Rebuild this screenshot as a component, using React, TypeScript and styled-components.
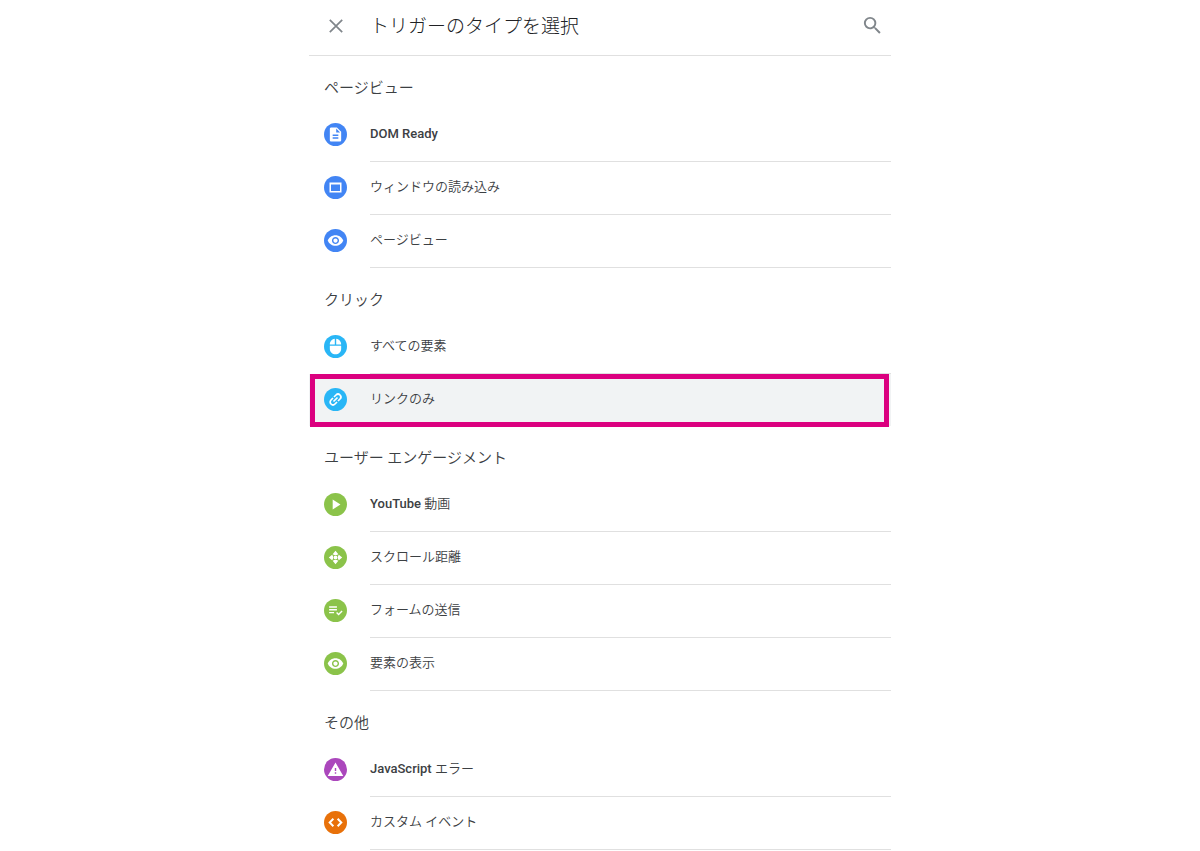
import React, { useState } from "react";
import type { ComponentType } from "react";
import styled, { createGlobalStyle, css } from "styled-components";
import {
  MdDescription,
  MdMouse,
  MdPlayArrow,
  MdPlaylistAddCheck,
  MdSearch,
  MdVisibility,
  MdWarning,
} from "react-icons/md";

const GlobalStyle = createGlobalStyle`
  *, *::before, *::after { box-sizing: border-box; }
  body {
    margin: 0;
    background: #fff;
    color: #3c4043;
    font-family: Roboto, "Noto Sans CJK JP", sans-serif;
  }
`;

const Panel = styled.main`
  max-width: 582px;
  margin: 0 auto;
`;

const Header = styled.header`
  display: flex;
  align-items: center;
  height: 56px;
  padding: 0 6px 4px 14px;
  border-bottom: 1px solid #e0e0e0;
`;

const Title = styled.h1`
  flex: 1;
  margin: 0 0 0 22px;
  padding-top: 2px;
  font-size: 19px;
  line-height: 26px;
  font-weight: 300;
  color: #202124;
`;

const IconButton = styled.button`
  display: flex;
  align-items: center;
  justify-content: center;
  width: 25px;
  height: 25px;
  padding: 0;
  border: 0;
  background: none;
  color: #80868b;
  cursor: pointer;
`;

const GroupTitle = styled.h2`
  margin: 0;
  height: 53px;
  padding: 20px 15px 9px;
  font-size: 15px;
  line-height: 24px;
  font-weight: 350;
  color: #3c4043;
`;

const List = styled.ul`
  margin: 0;
  padding: 0;
  list-style: none;
`;

const highlighted = css`
  background: #f1f3f4;

  &::after {
    content: "";
    position: absolute;
    inset: 0 2px -1px 1px;
    border: 5px solid #db007f;
  }
`;

const Row = styled.button<{ $selected: boolean }>`
  position: relative;
  display: flex;
  width: 100%;
  padding: 0 0 0 15px;
  border: 0;
  background: none;
  color: inherit;
  font: inherit;
  text-align: left;
  cursor: pointer;
  ${(p) => p.$selected && highlighted}
`;

const Badge = styled.span<{ $color: string }>`
  display: flex;
  align-items: center;
  justify-content: center;
  flex: none;
  width: 23px;
  height: 23px;
  margin: 14px 23px 0 0;
  border-radius: 50%;
  background: ${(p) => p.$color};
  color: #fff;
`;

const Label = styled.span<{ $divided: boolean }>`
  flex: 1;
  padding: 14px 0 16px;
  border-bottom: ${(p) => (p.$divided ? "1px solid #e0e0e0" : "0")};
  font-size: 13px;
  line-height: 22px;
  font-weight: 500;
`;

const Kana = styled.span`
  font-weight: 350;
`;

type IconProps = { size?: number };

const LinkIcon = ({ size = 17 }: IconProps) => (
  <svg width={size} height={size} viewBox="0 0 24 24" fill="none" stroke="currentColor" strokeWidth="2.4" aria-hidden="true">
    <g transform="rotate(-45 12 12)">
      <path d="M11 8H7a4 4 0 0 0 0 8h4M13 8h4a4 4 0 0 1 0 8h-4M8 12h8" />
    </g>
  </svg>
);

const CodeIcon = ({ size = 17 }: IconProps) => (
  <svg width={size} height={size} viewBox="0 0 24 24" fill="none" stroke="currentColor" strokeWidth="2.8" aria-hidden="true">
    <path d="M9 6.800L3.800 12 9 17.200M15 6.800L20.200 12 15 17.200" />
  </svg>
);

const ScrollIcon = ({ size = 17 }: IconProps) => (
  <svg width={size} height={size} viewBox="0 0 24 24" fill="currentColor" aria-hidden="true">
    <circle cx="12" cy="12" r="2.800" />
    <path d="M12 2.500l4 4.800-2.200 1.200h-3.600L8 7.300zM12 21.500l4-4.800-2.200-1.200h-3.600L8 16.700zM2.500 12l4.800-4 1.200 2.200v3.600L7.300 16zM21.500 12l-4.800-4-1.200 2.200v3.600l1.200 2.200z" />
  </svg>
);

const WindowIcon = ({ size = 17 }: IconProps) => (
  <svg width={size} height={size} viewBox="0 0 17 17" fill="currentColor" aria-hidden="true">
    <path fillRule="evenodd" d="M2.500 3.500h12v10h-12zM4 5.500v6.500h9V5.500z" />
  </svg>
);

const CloseIcon = () => (
  <svg width="14" height="14" viewBox="0 0 14 14" fill="none" stroke="currentColor" strokeWidth="1.7" aria-hidden="true">
    <path d="M.8.8l12.4 12.4M13.2.8L.8 13.2" />
  </svg>
);

type Trigger = {
  latin?: string;
  kana?: string;
  icon: ComponentType<IconProps>;
  color?: string;
};
type Group = { title: string; color: string; triggers: Trigger[] };

const groups: Group[] = [
  {
    title: "ページビュー",
    color: "#4285f4",
    triggers: [
      { latin: "DOM Ready", icon: MdDescription },
      { kana: "ウィンドウの読み込み", icon: WindowIcon },
      { kana: "ページビュー", icon: MdVisibility },
    ],
  },
  {
    title: "クリック",
    color: "#29b6f6",
    triggers: [
      { kana: "すべての要素", icon: MdMouse },
      { kana: "リンクのみ", icon: LinkIcon },
    ],
  },
  {
    title: "ユーザー エンゲージメント",
    color: "#8bc34a",
    triggers: [
      { latin: "YouTube ", kana: "動画", icon: MdPlayArrow },
      { kana: "スクロール距離", icon: ScrollIcon },
      { kana: "フォームの送信", icon: MdPlaylistAddCheck },
      { kana: "要素の表示", icon: MdVisibility },
    ],
  },
  {
    title: "その他",
    color: "#ab47bc",
    triggers: [
      { latin: "JavaScript ", kana: "エラー", icon: MdWarning },
      { kana: "カスタム イベント", icon: CodeIcon, color: "#e8710a" },
    ],
  },
];

export default function App() {
  const [selected, setSelected] = useState("リンクのみ");

  return (
    <>
      <GlobalStyle />
      <Panel lang="ja">
        <Header>
          <IconButton type="button" aria-label="閉じる">
            <CloseIcon />
          </IconButton>
          <Title>トリガーのタイプを選択</Title>
          <IconButton type="button" aria-label="検索">
            <MdSearch size={23} />
          </IconButton>
        </Header>
        {groups.map((group) => (
          <section key={group.title}>
            <GroupTitle>{group.title}</GroupTitle>
            <List>
              {group.triggers.map((trigger) => {
                const name = `${trigger.latin ?? ""}${trigger.kana ?? ""}`;
                const isSelected = name === selected;
                const Icon = trigger.icon;
                return (
                  <li key={name}>
                    <Row type="button" $selected={isSelected} aria-pressed={isSelected} onClick={() => setSelected(name)}>
                      <Badge $color={trigger.color ?? group.color}>
                        <Icon size={17} />
                      </Badge>
                      <Label $divided={!isSelected}>
                        {trigger.latin}
                        {trigger.kana && <Kana>{trigger.kana}</Kana>}
                      </Label>
                    </Row>
                  </li>
                );
              })}
            </List>
          </section>
        ))}
      </Panel>
    </>
  );
}
